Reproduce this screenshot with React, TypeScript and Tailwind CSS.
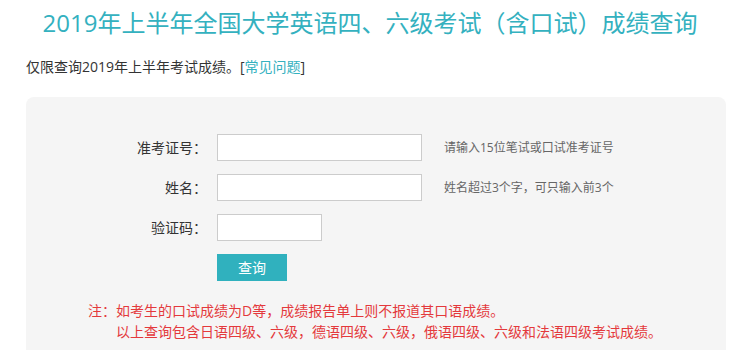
import React from 'react';

const font = { fontFamily: '"Open Sans", "Noto Sans CJK SC", sans-serif' };

const Row: React.FC<{ label: string; wide?: boolean; hint?: string }> = ({ label, wide = true, hint }) => (
  <div className="flex items-center h-[27px]">
    <label className="w-[181px] text-right text-[14px] text-[#333]">{label}</label>
    <input
      className={`ml-[10px] h-[27px] bg-white border border-[#ccc] outline-none ${wide ? 'w-[205px]' : 'w-[105px]'}`}
    />
    {hint && <span className="ml-[22px] text-[12px] text-[#666]">{hint}</span>}
  </div>
);

export default function App() {
  return (
    <div className="w-[740px] h-[350px] overflow-hidden bg-white" style={font}>
      <h1 className="pt-[6px] text-center text-[24px] leading-[34px] text-[#34b1bf] font-normal">
        2019年上半年全国大学英语四、六级考试（含口试）成绩查询
      </h1>
      <p className="mt-[17px] pl-[26px] text-[14px] leading-[20px] text-[#333]">
        仅限查询2019年上半年考试成绩。[<a className="text-[#34b1bf]">常见问题</a>]
      </p>
      <div className="mt-[20px] ml-[26px] w-[700px] h-[300px] rounded-lg bg-[#f5f5f5] pt-[37px]">
        <div className="flex flex-col gap-[13px]">
          <Row label="准考证号：" hint="请输入15位笔试或口试准考证号" />
          <Row label="姓名：" hint="姓名超过3个字，可只输入前3个" />
          <Row label="验证码：" wide={false} />
          <div className="flex">
            <button className="ml-[191px] w-[70px] h-[27px] bg-[#30b1be] text-white text-[14px]">查询</button>
          </div>
        </div>
        <div className="mt-[19px] ml-[62px] flex text-[14px] leading-[21px] text-[#e4393c]">
          <span>注：</span>
          <div>
            <p>如考生的口试成绩为D等，成绩报告单上则不报道其口语成绩。</p>
            <p>以上查询包含日语四级、六级，德语四级、六级，俄语四级、六级和法语四级考试成绩。</p>
          </div>
        </div>
      </div>
    </div>
  );
}
